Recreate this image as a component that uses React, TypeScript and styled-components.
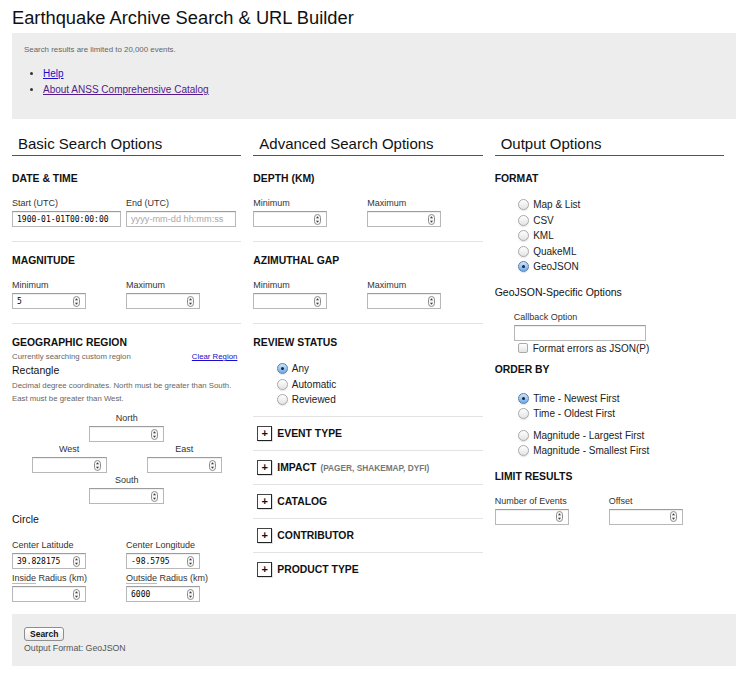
import React from 'react'
import styled, { createGlobalStyle } from 'styled-components'

const GlobalStyle = createGlobalStyle`
  html, body {
    margin: 0;
    padding: 0;
    background: #fff;
  }
  body {
    font-family: "Liberation Sans", Arial, Helvetica, sans-serif;
    color: #111;
  }
`

type Opt = { label: string; checked?: boolean }

const formats: Opt[] = [
  { label: 'Map & List' },
  { label: 'CSV' },
  { label: 'KML' },
  { label: 'QuakeML' },
  { label: 'GeoJSON', checked: true },
]

const reviewOpts: Opt[] = [
  { label: 'Any', checked: true },
  { label: 'Automatic' },
  { label: 'Reviewed' },
]

const toggles = [
  { title: 'EVENT TYPE' },
  { title: 'IMPACT', note: '(PAGER, SHAKEMAP, DYFI)' },
  { title: 'CATALOG' },
  { title: 'CONTRIBUTOR' },
  { title: 'PRODUCT TYPE' },
]

const Spinner = () => (
  <svg width="7" height="11" viewBox="0 0 7 11">
    <rect x="0.5" y="0.5" width="6" height="10" rx="3" fill="#f6f6f6" stroke="#8c8c8c" />
    <path d="M3.5 2.3 L5 4.3 H2 Z" fill="#3a3a3a" />
    <path d="M3.5 8.7 L5 6.7 H2 Z" fill="#3a3a3a" />
  </svg>
)

const InputField = ({
  width,
  value,
  placeholder,
  number,
}: {
  width: number
  value?: string
  placeholder?: string
  number?: boolean
}) => (
  <InputBox $width={width}>
    <BoxInput defaultValue={value} placeholder={placeholder} />
    {number && <Spinner />}
  </InputBox>
)

const Field = ({
  label,
  width = 74,
  value,
  placeholder,
  number = true,
  underline,
}: {
  label: string
  width?: number
  value?: string
  placeholder?: string
  number?: boolean
  underline?: string
}) => (
  <div>
    <FieldLabel>
      {underline && <Abbr>{underline}</Abbr>}
      {label}
    </FieldLabel>
    <InputField width={width} value={value} placeholder={placeholder} number={number} />
  </div>
)

const RadioGroup = ({ options, $top = 0 }: { options: Opt[]; $top?: number }) => (
  <RadioList $top={$top}>
    {options.map(o => (
      <RadioRow key={o.label}>
        <Radio $checked={o.checked} />
        {o.label}
      </RadioRow>
    ))}
  </RadioList>
)

const App = () => (
  <Page>
    <GlobalStyle />
    <Title>Earthquake Archive Search &amp; URL Builder</Title>
    <Intro>
      <IntroNote>Search results are limited to 20,000 events.</IntroNote>
      <LinkList>
        <li>
          <Link href="#help">Help</Link>
        </li>
        <li>
          <Link href="#about" $visited>
            About ANSS Comprehensive Catalog
          </Link>
        </li>
      </LinkList>
    </Intro>

    <Columns>
      <Column>
        <ColumnHeading>Basic Search Options</ColumnHeading>
        <Section>
          <SectionTitle>DATE &amp; TIME</SectionTitle>
          <FieldRow>
            <Field label="Start (UTC)" width={109} value="1900-01-01T00:00:00" number={false} />
            <Field label="End (UTC)" width={110} placeholder="yyyy-mm-dd hh:mm:ss" number={false} />
          </FieldRow>
        </Section>
        <Section>
          <SectionTitle>MAGNITUDE</SectionTitle>
          <FieldRow>
            <Field label="Minimum" value="5" />
            <Field label="Maximum" />
          </FieldRow>
        </Section>
        <Section $rule={false} $bottom={12}>
          <SectionTitle $space={1}>GEOGRAPHIC REGION</SectionTitle>
          <RegionStatus>
            <span>Currently searching custom region</span>
            <SmallLink href="#clear">Clear Region</SmallLink>
          </RegionStatus>
          <SubTitle $top={0}>Rectangle</SubTitle>
          <Note>
            Decimal degree coordinates. North must be greater than South.
            <br />
            East must be greater than West.
          </Note>
          <RectGrid>
            <RectCell>
              <CellLabel>North</CellLabel>
              <InputField width={75} number />
            </RectCell>
            <RectRow>
              <RectCell>
                <CellLabel>West</CellLabel>
                <InputField width={75} number />
              </RectCell>
              <RectCell>
                <CellLabel>East</CellLabel>
                <InputField width={75} number />
              </RectCell>
            </RectRow>
            <RectCell>
              <CellLabel>South</CellLabel>
              <InputField width={75} number />
            </RectCell>
          </RectGrid>
          <SubTitle $top={8}>Circle</SubTitle>
          <CircleGrid>
            <Field label="Center Latitude" value="39.828175" />
            <Field label="Center Longitude" value="-98.5795" />
            <Field label=" Radius (km)" underline="Inside" />
            <Field label=" Radius (km)" underline="Outside" value="6000" />
          </CircleGrid>
        </Section>
      </Column>

      <Column>
        <ColumnHeading>Advanced Search Options</ColumnHeading>
        <Section>
          <SectionTitle>DEPTH (KM)</SectionTitle>
          <FieldRow>
            <Field label="Minimum" />
            <Field label="Maximum" />
          </FieldRow>
        </Section>
        <Section>
          <SectionTitle>AZIMUTHAL GAP</SectionTitle>
          <FieldRow>
            <Field label="Minimum" />
            <Field label="Maximum" />
          </FieldRow>
        </Section>
        <Section $bottom={8.5}>
          <SectionTitle>REVIEW STATUS</SectionTitle>
          <RadioGroup options={reviewOpts} />
        </Section>
        {toggles.map((t, i) => (
          <Toggle key={t.title} $last={i === toggles.length - 1}>
            <PlusBox>+</PlusBox>
            <ToggleTitle>{t.title}</ToggleTitle>
            {t.note && <ToggleNote>{t.note}</ToggleNote>}
          </Toggle>
        ))}
      </Column>

      <Column>
        <ColumnHeading>Output Options</ColumnHeading>
        <Section $rule={false} $bottom={0}>
          <SectionTitle>FORMAT</SectionTitle>
          <RadioGroup options={formats} />
          <SubTitle $top={10}>GeoJSON-Specific Options</SubTitle>
          <Indent>
            <FieldLabel>Callback Option</FieldLabel>
            <InputField width={132} />
            <CheckRow>
              <CheckBox />
              Format errors as JSON(P)
            </CheckRow>
          </Indent>
        </Section>
        <Section $rule={false} $top={8} $bottom={0}>
          <SectionTitle>ORDER BY</SectionTitle>
          <RadioGroup
            $top={3}
            options={[{ label: 'Time - Newest First', checked: true }, { label: 'Time - Oldest First' }]}
          />
          <RadioGroup
            $top={6}
            options={[{ label: 'Magnitude - Largest First' }, { label: 'Magnitude - Smallest First' }]}
          />
        </Section>
        <Section $rule={false} $top={11} $bottom={0}>
          <SectionTitle>LIMIT RESULTS</SectionTitle>
          <FieldRow>
            <Field label="Number of Events" />
            <Field label="Offset" />
          </FieldRow>
        </Section>
      </Column>
    </Columns>

    <Footer>
      <SearchButton type="button">Search</SearchButton>
      <FooterNote>Output Format: GeoJSON</FooterNote>
    </Footer>
  </Page>
)

export default App

const Page = styled.div`
  width: 724px;
  padding: 0 14px 20px 12px;
`

const Title = styled.h1`
  margin: 0;
  padding: 6px 0 3px;
  font-size: 18.3px;
  font-weight: normal;
  line-height: 24px;
  color: #111;
`

const Intro = styled.div`
  height: 86px;
  box-sizing: border-box;
  background: #ededed;
  padding: 12px 12px 0;
`

const IntroNote = styled.p`
  margin: 0 0 11px;
  font-size: 7.9px;
  line-height: 10px;
  color: #666;
`

const LinkList = styled.ul`
  margin: 0;
  padding-left: 19px;
  font-size: 10px;
  line-height: 16px;
  color: #333;
`

const Link = styled.a<{ $visited?: boolean }>`
  color: ${p => (p.$visited ? '#551a8b' : '#1a0dcc')};
  text-decoration: underline;
`

const Columns = styled.div`
  display: grid;
  grid-template-columns: repeat(3, 1fr);
  margin-top: 16px;
`

const Column = styled.div`
  padding-right: 12px;
  min-width: 0;
`

const ColumnHeading = styled.h2`
  margin: 0 0 4px;
  padding: 0 6px 2px;
  font-size: 15px;
  line-height: 18px;
  font-weight: normal;
  color: #111;
  border-bottom: 1px solid #555;
`

const Section = styled.section<{ $rule?: boolean; $top?: number; $bottom?: number }>`
  padding-top: ${p => p.$top ?? 12}px;
  padding-bottom: ${p => p.$bottom ?? 14}px;
  border-bottom: ${p => (p.$rule === false ? 'none' : '1px solid #e3e3e3')};
`

const SectionTitle = styled.h3<{ $space?: number }>`
  margin: 0 0 ${p => p.$space ?? 11}px;
  font-size: 10.4px;
  line-height: 14px;
  font-weight: bold;
  color: #111;
`

const FieldRow = styled.div`
  display: grid;
  grid-template-columns: 114px 114px;
`

const CircleGrid = styled(FieldRow)`
  margin-top: 13px;
  row-gap: 3px;
`

const FieldLabel = styled.div`
  font-size: 9px;
  line-height: 12px;
  margin-bottom: 2px;
  color: #333;
  white-space: pre;
`

const Abbr = styled.span`
  border-bottom: 1px solid #bbb;
`

const InputBox = styled.div<{ $width: number }>`
  display: flex;
  align-items: center;
  box-sizing: border-box;
  width: ${p => p.$width}px;
  height: 16px;
  padding: 0 5px 0 4px;
  background: #fff;
  border: 1px solid #b8b8b8;
  border-top-color: #9c9c9c;
  box-shadow: inset 0 1px 1px rgba(0, 0, 0, 0.07);
`

const BoxInput = styled.input`
  flex: 1;
  min-width: 0;
  height: 14px;
  padding: 0;
  border: 0;
  outline: 0;
  background: transparent;
  font-family: "DejaVu Sans Mono", "Liberation Mono", monospace;
  font-size: 8px;
  color: #000;
  &::placeholder {
    font-family: "Liberation Sans", Arial, sans-serif;
    font-size: 9.2px;
    color: #a8a8a8;
  }
`

const RegionStatus = styled.div`
  display: flex;
  justify-content: space-between;
  padding-right: 4px;
  font-size: 7.8px;
  line-height: 12px;
  color: #666;
`

const SmallLink = styled.a`
  color: #1a0dcc;
  text-decoration: underline;
`

const SubTitle = styled.div<{ $top?: number }>`
  margin-top: ${p => p.$top ?? 1}px;
  font-size: 10.5px;
  line-height: 14px;
  color: #111;
`

const Note = styled.p`
  margin: 2px 0 0;
  font-size: 7.8px;
  line-height: 13px;
  color: #666;
`

const RectGrid = styled.div`
  display: flex;
  flex-direction: column;
  align-items: center;
  gap: 1px;
  margin-top: 7px;
`

const RectRow = styled.div`
  display: flex;
  gap: 40px;
`

const RectCell = styled.div`
  display: flex;
  flex-direction: column;
  align-items: center;
`

const CellLabel = styled.div`
  font-size: 9px;
  line-height: 12px;
  margin-bottom: 2px;
  color: #333;
`

const RadioList = styled.div<{ $top: number }>`
  padding: ${p => p.$top}px 0 0 23.5px;
`

const RadioRow = styled.label`
  display: flex;
  align-items: center;
  height: 15.5px;
  font-size: 10px;
  color: #222;
`

const Radio = styled.span<{ $checked?: boolean }>`
  position: relative;
  flex: none;
  box-sizing: border-box;
  width: 11px;
  height: 11px;
  margin-right: 4px;
  border-radius: 50%;
  border: 1px solid ${p => (p.$checked ? '#5a7eaa' : '#a9a9a9')};
  background: ${p =>
    p.$checked ? 'linear-gradient(#cfe5fc, #6fa9ea)' : 'linear-gradient(#fefefe, #e4e4e4)'};
  box-shadow: 0 1px 1px rgba(0, 0, 0, 0.1);
  &::after {
    content: '';
    display: ${p => (p.$checked ? 'block' : 'none')};
    position: absolute;
    left: 3px;
    top: 3px;
    width: 3px;
    height: 3px;
    border-radius: 50%;
    background: #1d2632;
  }
`

const Indent = styled.div`
  margin: 12px 0 0 19px;
`

const CheckRow = styled.label`
  display: flex;
  align-items: center;
  height: 13px;
  margin-top: 1px;
  padding-left: 4px;
  font-size: 10px;
  color: #222;
`

const CheckBox = styled.span`
  flex: none;
  box-sizing: border-box;
  width: 10px;
  height: 10px;
  margin-right: 5px;
  border-radius: 2px;
  border: 1px solid #a9a9a9;
  background: linear-gradient(#fefefe, #e4e4e4);
`

const Toggle = styled.div<{ $last?: boolean }>`
  display: flex;
  align-items: center;
  padding: 9px 0 9px 4px;
  border-bottom: ${p => (p.$last ? 'none' : '1px solid #e3e3e3')};
`

const PlusBox = styled.span`
  display: flex;
  align-items: center;
  justify-content: center;
  flex: none;
  box-sizing: border-box;
  width: 15px;
  height: 15px;
  margin-right: 5px;
  border: 1px solid #444;
  border-right-color: #222;
  border-bottom-color: #222;
  background: #fff;
  box-shadow: 1px 1px 0 rgba(0, 0, 0, 0.12);
  font-size: 11px;
  font-weight: bold;
  line-height: 1;
  color: #111;
`

const ToggleTitle = styled.span`
  font-size: 10.4px;
  font-weight: bold;
  color: #111;
`

const ToggleNote = styled.span`
  margin-left: 4px;
  font-size: 8.3px;
  font-weight: bold;
  color: #777;
`

const Footer = styled.div`
  height: 52px;
  box-sizing: border-box;
  background: #ededed;
  padding: 13px 12px 0;
`

const SearchButton = styled.button`
  display: block;
  height: 14px;
  padding: 0 5px;
  border: 1px solid #8e8e8e;
  border-radius: 3px;
  background: linear-gradient(#ffffff, #e9e9e9);
  font-family: "Liberation Sans", Arial, sans-serif;
  font-size: 8.5px;
  font-weight: bold;
  line-height: 12px;
  color: #111;
`

const FooterNote = styled.div`
  margin-top: 1px;
  font-size: 8.8px;
  line-height: 12px;
  color: #555;
`
